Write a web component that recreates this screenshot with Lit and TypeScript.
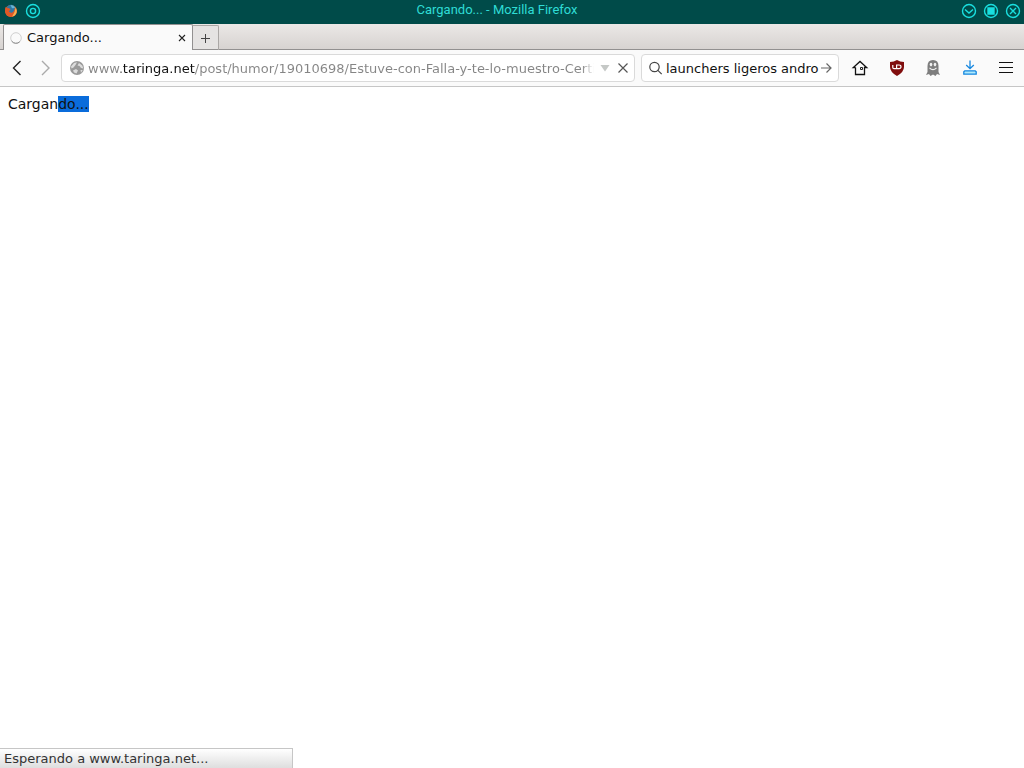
import { LitElement, html, css } from "lit";
import { customElement, property, state } from "lit/decorators.js";

@customElement("title-bar")
export class TitleBar extends LitElement {
  @property() caption = "";

  static styles = css`
    :host {
      display: block;
      background: #004b49;
      color: #2fdcd5;
    }
    .bar {
      display: grid;
      grid-template-columns: 1fr auto 1fr;
      align-items: center;
      height: 24px;
      padding: 0 3px;
      box-sizing: border-box;
    }
    .group {
      display: flex;
      align-items: center;
      gap: 6px;
      padding-bottom: 2px;
    }
    .end {
      justify-content: flex-end;
    }
    .caption {
      margin: 0 30px 4px 0;
      font: 13px/16px Roboto, sans-serif;
    }
    button {
      display: block;
      padding: 0;
      border: 0;
      background: none;
      color: #19dfdf;
    }
    svg {
      display: block;
    }
  `;

  render() {
    return html`
      <header class="bar">
        <div class="group">
          <button aria-label="Firefox">
            <svg width="16" height="16" viewBox="0 0 16 16">
              <circle cx="8" cy="8" r="6" fill="#e0602c" />
              <circle cx="8" cy="6.2" r="4.4" fill="#2f78a6" />
              <path d="M7.5 1.9Q10.8 2 12.2 5L9 5.2Z" fill="#69b7d5" />
              <path d="M2.5 4Q4 5.5 6 5L7.6 6.8L5.8 8.2Q7 10.2 9.4 9.4Q11.4 8.4 11.8 5Q14.4 8 13 11Q10.6 14.2 7 13.8Q3 13 2.2 9Q1.8 6 2.5 4Z" fill="#df5826" />
              <path d="M12.6 4.6Q14.6 8 13 11Q11.5 13.2 9 13.7Q12.2 10 12.6 4.6Z" fill="#f4b351" />
            </svg>
          </button>
          <button aria-label="Menú de la ventana">
            <svg width="16" height="16" viewBox="0 0 16 16" fill="none" stroke="currentColor" stroke-width="1.4">
              <circle cx="8" cy="8" r="6.5" />
              <circle cx="8" cy="8" r="2.6" />
            </svg>
          </button>
        </div>
        <div class="caption">${this.caption}</div>
        <div class="group end">
          <button aria-label="Minimizar">
            <svg width="16" height="16" viewBox="0 0 16 16" fill="none" stroke="currentColor" stroke-width="1.4">
              <circle cx="8" cy="8" r="6.5" />
              <path d="M4 6.5L8 10L12 6.5" />
            </svg>
          </button>
          <button aria-label="Maximizar">
            <svg width="16" height="16" viewBox="0 0 16 16" fill="none" stroke="currentColor" stroke-width="1.4">
              <circle cx="8" cy="8" r="6.5" />
              <path d="M5 5H11V11H5Z" fill="currentColor" />
            </svg>
          </button>
          <button aria-label="Cerrar">
            <svg width="16" height="16" viewBox="0 0 16 16" fill="none" stroke="currentColor" stroke-width="1.4">
              <circle cx="8" cy="8" r="6.5" />
              <path d="M5 5L11 11M11 5L5 11" />
            </svg>
          </button>
        </div>
      </header>
    `;
  }
}

@customElement("tab-strip")
export class TabStrip extends LitElement {
  @property() label = "";

  static styles = css`
    :host {
      display: block;
    }
    .strip {
      display: flex;
      height: 26px;
      padding-left: 3px;
      box-sizing: border-box;
      background: linear-gradient(#ebe8e6, #d6d2d0);
      box-shadow: inset 0 -1px #929090;
    }
    .tab {
      display: flex;
      align-items: center;
      width: 190px;
      padding: 1px 5px 0 6px;
      box-sizing: border-box;
      border: 1px solid #929090;
      border-width: 1px 1px 0;
      border-radius: 2px 2px 0 0;
      background: #fafafa;
    }
    .name {
      flex: 1;
      padding-left: 4px;
      font: 13px/16px "DejaVu Sans", sans-serif;
      color: #111;
    }
    button {
      display: grid;
      place-items: center;
      padding: 0;
      border: 0;
      background: none;
      color: #222;
    }
    .new {
      width: 26px;
      margin-top: 1px;
      border: solid #aaa7a5;
      border-width: 1px 1px 0 0;
      border-radius: 0 2px 0 0;
      background: #e5e3e2;
      box-shadow: inset 0 -1px #929090;
    }
    svg {
      display: block;
    }
  `;

  render() {
    return html`
      <div class="strip">
        <div class="tab">
          <svg width="13" height="14" viewBox="0 0 13 14" fill="none">
            <circle cx="6" cy="7" r="5.3" stroke="#d0d0d0" />
            <path d="M1.6 10A5.3 5.3 0 0 0 9.8 10.7" stroke="#8a8a8a" />
          </svg>
          <span class="name">${this.label}</span>
          <button aria-label="Cerrar pestaña">
            <svg width="10" height="10" viewBox="0 0 10 10" stroke="currentColor" stroke-width="1.1">
              <path d="M2 2L8 8M8 2L2 8" />
            </svg>
          </button>
        </div>
        <button class="new" aria-label="Nueva pestaña">
          <svg width="11" height="11" viewBox="0 0 11 11" stroke="#444">
            <path d="M5.5 1V10M1 5.5H10" />
          </svg>
        </button>
      </div>
    `;
  }
}

@customElement("nav-toolbar")
export class NavToolbar extends LitElement {
  @property() address = "";
  @property() query = "";

  static styles = css`
    :host {
      display: block;
    }
    .bar {
      display: flex;
      align-items: center;
      height: 37px;
      box-sizing: border-box;
      border-bottom: 1px solid #c6c6c6;
      background: #fafafa;
    }
    .history {
      display: flex;
      gap: 12px;
      padding: 0 7px 0 8px;
    }
    .field {
      display: flex;
      align-items: center;
      height: 28px;
      box-sizing: border-box;
      border: 1px solid #dadada;
      border-radius: 4px;
      background: #fff;
    }
    .address {
      flex: 1;
      gap: 3px;
      min-width: 0;
      padding: 0 4px 0 7px;
    }
    .search {
      width: 198px;
      margin-left: 6px;
      padding: 0 6px;
      gap: 2px;
    }
    input {
      flex: 1;
      min-width: 0;
      height: 20px;
      padding: 1px 0 0;
      box-sizing: border-box;
      border: 0;
      outline: 0;
      background: none;
      font: 13px/18px "DejaVu Sans", sans-serif;
      color: #111;
    }
    .url {
      color: transparent;
      caret-color: #111;
      background: linear-gradient(
        to right,
        #858585 33px,
        #111 33px 107px,
        #858585 107px calc(100% - 12px),
        transparent
      );
      -webkit-background-clip: text;
      background-clip: text;
    }
    button {
      display: grid;
      place-items: center;
      flex: none;
      padding: 0;
      border: 0;
      background: none;
      color: #222;
    }
    .tools {
      display: flex;
      justify-content: space-between;
      width: 185px;
      padding: 0 9px 0 12px;
      box-sizing: border-box;
    }
    .label {
      display: flex;
    }
    svg {
      display: block;
    }
  `;

  render() {
    return html`
      <nav class="bar">
        <div class="history">
          <button aria-label="Atrás">
            <svg width="17" height="18" viewBox="0 0 17 18" fill="none" stroke="#222" stroke-width="1.4">
              <path d="M12.5 2L5.5 9L12.5 16" />
            </svg>
          </button>
          <button aria-label="Adelante" disabled>
            <svg width="17" height="18" viewBox="0 0 17 18" fill="none" stroke="#aaa" stroke-width="1.4">
              <path d="M5 2L12 9L5 16" />
            </svg>
          </button>
        </div>
        <div class="field address">
          <label class="label" for="url" aria-label="Dirección">
            <svg width="16" height="16" viewBox="0 0 16 16">
              <circle cx="8" cy="8" r="7" fill="#999" />
              <path d="M2 6.5L5 3L8 2.2L6.5 5L4.5 7.5L2.5 8.5ZM10 3L13.2 5.5L14.5 8.5L12 8L10.5 6L8.5 5.5ZM4 10.5L7 9L9 10.5L7.5 13.5L5 12.5ZM11.5 10L13.8 10L12 12.8Z" fill="#dcdcdc" />
            </svg>
          </label>
          <input class="url" id="url" type="text" .value=${this.address} />
          <button aria-label="Mostrar historial">
            <svg width="16" height="16" viewBox="0 0 16 16">
              <path d="M3.5 5H12.5L8 11.5Z" fill="#c5c8c6" />
            </svg>
          </button>
          <button aria-label="Detener">
            <svg width="14" height="14" viewBox="0 0 14 14" stroke="#555" stroke-width="1.2">
              <path d="M2.5 2.5L11.5 11.5M11.5 2.5L2.5 11.5" />
            </svg>
          </button>
        </div>
        <div class="field search">
          <label class="label" for="query" aria-label="Buscar">
            <svg width="16" height="16" viewBox="0 0 16 16" fill="none" stroke="#444" stroke-width="1.2">
              <circle cx="6.5" cy="7" r="4.7" />
              <path d="M9.9 10.4L13.7 14.2" />
            </svg>
          </label>
          <input id="query" type="text" .value=${this.query} />
          <button aria-label="Ir">
            <svg width="11" height="12" viewBox="0 0 11 12" fill="none" stroke="#666" stroke-width="1.2">
              <path d="M0 6H10M5.5 1.5L10 6L5.5 10.5" />
            </svg>
          </button>
        </div>
        <div class="tools">
          <button aria-label="Inicio">
            <svg width="18" height="18" viewBox="0 0 18 18" fill="none" stroke="#111" stroke-width="1.3">
              <path d="M4.5 8.5H2.3L9 2.4L15.7 8.5H13.5V15.5H4.5V8.5" />
              <path d="M9.5 8.5H11.5V10.5H9.5Z" stroke="#222" stroke-width="1" />
            </svg>
          </button>
          <button aria-label="uBlock Origin">
            <svg width="18" height="18" viewBox="0 0 18 18">
              <path d="M9 1Q12 3 16 3V8Q16 13 9 17Q2 13 2 8V3Q6 3 9 1Z" fill="#800d0d" />
              <path d="M4.8 6V8.4Q4.8 9.6 6 9.6H8.6V6H11Q13 6 13 7.8Q13 9.6 11 9.6H8.6" fill="none" stroke="#fff" stroke-width="1.2" />
            </svg>
          </button>
          <button aria-label="Ghostery">
            <svg width="18" height="18" viewBox="0 0 18 18">
              <path d="M3.5 7Q3.5 1 9 1Q14.5 1 14.5 7V13L16 16L13 15L11.5 17L9 15.5L6.5 17L5 15L2 16L3.5 13Z" fill="#7d7d7d" />
              <ellipse cx="7" cy="5.6" rx="1.3" ry="1.8" fill="#f2f2f2" />
              <ellipse cx="11" cy="5.6" rx="1.3" ry="1.8" fill="#f2f2f2" />
              <path d="M5.5 8.8Q9 12.5 12.5 8.8" fill="none" stroke="#eee" stroke-width="1.2" />
            </svg>
          </button>
          <button aria-label="Descargas">
            <svg width="18" height="18" viewBox="0 0 18 18" fill="none" stroke="#1687df" stroke-width="1.3">
              <path d="M9 1.5V9.5M5.2 6L9 9.7L12.8 6" />
              <path d="M3.8 11.8H14.2L15.2 12.8V15.2H2.8V12.8Z" fill="#aee9fc" />
            </svg>
          </button>
          <button aria-label="Abrir menú">
            <svg width="18" height="18" viewBox="0 0 18 18" stroke="#111">
              <path d="M2 3.5H16M2 8.5H16M2 13.5H16" />
            </svg>
          </button>
        </div>
      </nav>
    `;
  }
}

@customElement("app-root")
export class AppRoot extends LitElement {
  @state() private pageTitle = "Cargando...";

  static styles = css`
    :host {
      display: flex;
      flex-direction: column;
      min-height: 100vh;
      background: #fff;
      color: #111;
      font-family: "DejaVu Sans", sans-serif;
    }
    .page {
      flex: 1;
      padding: 8px;
      font-size: 14px;
      line-height: 18px;
    }
    .selected {
      display: inline-block;
      line-height: 16px;
      background: #0a6cdb;
    }
    .status {
      align-self: flex-start;
      min-width: 293px;
      padding: 1px 4px 0;
      box-sizing: border-box;
      border: solid #c6c6c6;
      border-width: 1px 1px 0 0;
      background: linear-gradient(#fff, #dedede);
      font-size: 13px;
      line-height: 18px;
      color: #333;
    }
  `;

  render() {
    return html`
      <title-bar caption="${this.pageTitle} - Mozilla Firefox"></title-bar>
      <tab-strip label=${this.pageTitle}></tab-strip>
      <nav-toolbar
        address="www.taringa.net/post/humor/19010698/Estuve-con-Falla-y-te-lo-muestro-Certificado"
        query="launchers ligeros andro"
      ></nav-toolbar>
      <main class="page">Cargan<span class="selected">do...</span></main>
      <div class="status" role="status">Esperando a www.taringa.net...</div>
    `;
  }
}
